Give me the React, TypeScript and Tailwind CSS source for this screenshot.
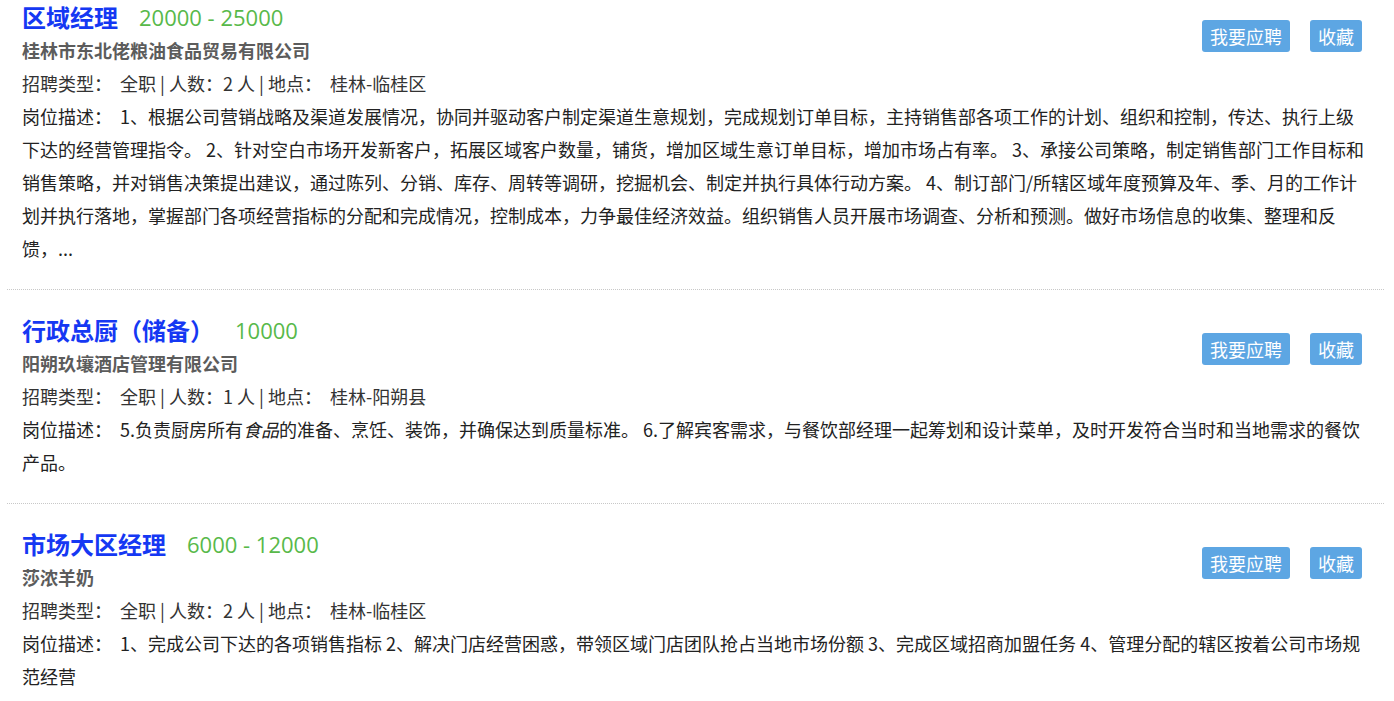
import React from "react";

type Job = {
  title: string;
  salary: string;
  company: string;
  count: number;
  place: string;
  desc: React.ReactNode;
};

const jobs: Job[] = [
  {
    title: "区域经理",
    salary: "20000 - 25000",
    company: "桂林市东北佬粮油食品贸易有限公司",
    count: 2,
    place: "桂林-临桂区",
    desc: "1、根据公司营销战略及渠道发展情况，协同并驱动客户制定渠道生意规划，完成规划订单目标，主持销售部各项工作的计划、组织和控制，传达、执行上级下达的经营管理指令。 2、针对空白市场开发新客户，拓展区域客户数量，铺货，增加区域生意订单目标，增加市场占有率。 3、承接公司策略，制定销售部门工作目标和销售策略，并对销售决策提出建议，通过陈列、分销、库存、周转等调研，挖掘机会、制定并执行具体行动方案。 4、制订部门/所辖区域年度预算及年、季、月的工作计划并执行落地，掌握部门各项经营指标的分配和完成情况，控制成本，力争最佳经济效益。组织销售人员开展市场调查、分析和预测。做好市场信息的收集、整理和反馈，...",
  },
  {
    title: "行政总厨（储备）",
    salary: "10000",
    company: "阳朔玖壤酒店管理有限公司",
    count: 1,
    place: "桂林-阳朔县",
    desc: (
      <>
        5.负责厨房所有<em>食品</em>的准备、烹饪、装饰，并确保达到质量标准。 6.了解宾客需求，与餐饮部经理一起筹划和设计菜单，及时开发符合当时和当地需求的餐饮产品。
      </>
    ),
  },
  {
    title: "市场大区经理",
    salary: "6000 - 12000",
    company: "莎浓羊奶",
    count: 2,
    place: "桂林-临桂区",
    desc: "1、完成公司下达的各项销售指标 2、解决门店经营困惑，带领区域门店团队抢占当地市场份额 3、完成区域招商加盟任务 4、管理分配的辖区按着公司市场规范经营",
  },
];

function JobItem({ job, first }: { job: Job; first: boolean }) {
  return (
    <div
      className={
        "pl-[15px] pr-[14px] pb-[24px] border-b border-dotted border-[#c8c8c8] " +
        (first ? "pt-0" : "pt-[23px]")
      }
    >
      <div className="float-right mt-[20px] mr-[8px] flex gap-[20px]">
        <button className="h-[32px] px-[8px] rounded-[3px] bg-[#5da6e3] text-white text-[18px] leading-[32px]">
          我要应聘
        </button>
        <button className="h-[32px] px-[8px] rounded-[3px] bg-[#5da6e3] text-white text-[18px] leading-[32px]">
          收藏
        </button>
      </div>
      <div className="flex items-center h-[34px]">
        <span className="text-[24px] font-bold text-[#1538f3]">{job.title}</span>
        <span className="ml-[21px] text-[22px] text-[#58b94a] font-['Open_Sans',sans-serif]">
          {job.salary}
        </span>
      </div>
      <div className="leading-[33px] font-bold text-[#5c5c5c]">{job.company}</div>
      <div className="leading-[33px] text-[#333]">
        招聘类型：&nbsp; 全职 | 人数：{job.count} 人 | 地点：&nbsp; {job.place}
      </div>
      <div className="leading-[33px] text-[#222]">
        岗位描述：&nbsp; {job.desc}
      </div>
    </div>
  );
}

export default function App() {
  return (
    <div
      className="min-h-screen bg-white text-[18px]"
      style={{ fontFamily: '"Noto Sans CJK SC", "Noto Sans", sans-serif' }}
    >
      <div className="ml-[7px] w-[1377px]">
        {jobs.map((job, i) => (
          <JobItem key={i} job={job} first={i === 0} />
        ))}
      </div>
    </div>
  );
}
